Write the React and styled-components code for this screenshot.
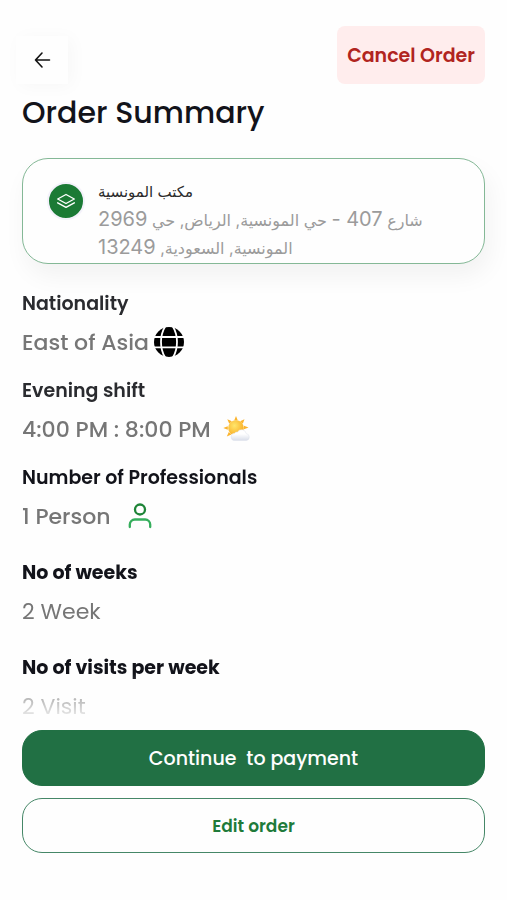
import React from "react";
import styled, { createGlobalStyle } from "styled-components";

const GlobalStyle = createGlobalStyle`
  *, *::before, *::after { box-sizing: border-box; }
  body {
    margin: 0;
    background: #fefefe;
    color: #12131a;
    font-family: Poppins, Inter, "DejaVu Sans", sans-serif;
  }
  h1, h2, p, dl, dt, dd { margin: 0; }
  button { font-family: inherit; cursor: pointer; }
  svg { display: block; flex: none; }
`;

const Page = styled.main`
  min-height: 100vh;
  display: flex;
  flex-direction: column;
  padding: 26px 22px 46px;
`;

const Header = styled.header`
  display: flex;
  justify-content: space-between;
  align-items: flex-end;
`;

const BackButton = styled.button`
  display: grid;
  place-items: center;
  width: 52px;
  height: 48px;
  margin-left: -6px;
  padding: 0;
  border: 0;
  background: #fefefe;
  box-shadow: 4px 2px 18px rgba(0, 0, 0, 0.03);
`;

const CancelButton = styled.button`
  height: 58px;
  padding: 0 10px;
  border: 0;
  border-radius: 8px;
  background: #ffeded;
  color: #b12420;
  font-size: 19px;
  font-weight: 600;
  white-space: nowrap;
`;

const Title = styled.h1`
  margin-top: 8px;
  font-size: 30px;
  line-height: 42px;
  font-weight: 500;
`;

const AddressCard = styled.section`
  display: flex;
  gap: 13px;
  margin-top: 24px;
  padding: 19px 24px 0;
  min-height: 106px;
  border: 1px solid #84b896;
  border-radius: 26px;
  background: #fefefe;
  box-shadow: 4px 12px 24px rgba(0, 0, 0, 0.05);
`;

const Badge = styled.span`
  display: grid;
  place-items: center;
  flex: none;
  width: 38px;
  height: 38px;
  margin-top: 4px;
  border: 2px solid #f4f2fb;
  border-radius: 50%;
  background: #1b7a35;
`;

const AddressText = styled.div`
  direction: rtl;
  text-align: left;
  font-family: Inter, "DejaVu Sans", sans-serif;
  line-height: 28px;
`;

const AddressName = styled.h2`
  color: #2b2b2b;
  font-size: 15px;
  line-height: 28px;
  font-weight: 400;
`;

const AddressLine = styled.p`
  color: #9b9b9b;
  font-size: 16px;
  line-height: 28px;
`;

const Digits = styled.span`
  font-size: 20px;
  line-height: 1;
`;

const Details = styled.dl`
  display: flex;
  flex-direction: column;
  gap: 26px;
  margin-top: 27px;
  mask-image: linear-gradient(#000 calc(100% - 50px), transparent);
`;

const DetailGroup = styled.div`
  display: flex;
  flex-direction: column;
  gap: 18px;
`;

const Label = styled.dt`
  color: ${(p) => (p.$dark ? "#12131a" : "#2a2b2f")};
  font-size: 19px;
  line-height: 26px;
  font-weight: ${(p) => (p.$bold ? 700 : 600)};
`;

const Value = styled.dd`
  display: flex;
  align-items: center;
  gap: ${(p) => (p.$gap ? p.$gap : 0)}px;
  height: 36px;
  margin-top: 7px;
  color: #767676;
  font-size: 22px;
  font-weight: ${(p) => (p.$gap ? 500 : 400)};
`;

const Actions = styled.footer`
  display: flex;
  flex-direction: column;
  gap: 12px;
  margin-top: 6px;
`;

const ActionButton = styled.button`
  height: ${(p) => (p.$primary ? 56 : 55)}px;
  border: 1px solid ${(p) => (p.$primary ? "#217044" : "#458767")};
  border-radius: 20px;
  background: ${(p) => (p.$primary ? "#217044" : "#fefefe")};
  color: ${(p) => (p.$primary ? "#fefefe" : "#207a3a")};
  font-size: ${(p) => (p.$primary ? 19 : 17)}px;
  font-weight: ${(p) => (p.$primary ? 500 : 600)};
  white-space: pre;
`;

const ArrowIcon = () => (
  <svg width="18" height="18" viewBox="0 0 18 18" fill="none" stroke="#111" strokeWidth="1.6" strokeLinecap="round" strokeLinejoin="round" aria-hidden="true">
    <path d="M16.500 9H2.500M9 2L2.500 9L9 16" />
  </svg>
);

const LayersIcon = () => (
  <svg width="20" height="16" viewBox="0 0 20 16" fill="none" stroke="#fff" strokeWidth="1.4" strokeLinecap="round" strokeLinejoin="round" aria-hidden="true">
    <path d="M10 1.500L18.300 6 10 10.500 1.700 6z" />
    <path d="M1.700 9.800L10 14.300l8.300-4.500" />
  </svg>
);

const GlobeIcon = () => (
  <svg width="30" height="30" viewBox="0 0 30 30" aria-hidden="true">
    <circle cx="15" cy="15" r="15" fill="#000" />
    <g fill="none" stroke="#fff" strokeWidth="1.800">
      <path d="M11.500-1C5.500 8 5.500 22 11.500 31M18.500-1C24.500 8 24.500 22 18.500 31" />
      <path d="M0 10h30M0 20.300h30" />
    </g>
  </svg>
);

const SunCloudIcon = () => (
  <svg width="28" height="26" viewBox="0 0 28 26" aria-hidden="true">
    <defs>
      <radialGradient id="sun" cx="40%" cy="35%" r="65%">
        <stop offset="0" stopColor="#ffe66b" />
        <stop offset="1" stopColor="#f9ae25" />
      </radialGradient>
      <linearGradient id="cloud" x1="0" y1="0" x2="0" y2="1">
        <stop offset="0.4" stopColor="#fff" />
        <stop offset="1" stopColor="#d8dde9" />
      </linearGradient>
    </defs>
    <path
      d="M13 0l1.800 4.500h-3.600zM21.500 3.200l-1.700 4.600-2.700-2.500zM25.500 11.500l-4.500 1.800v-3.600zM4.300 3.200l4.600 2-2.600 2.600zM.300 12l4.500-1.800v3.600zM3.800 20.600l2-4.500 2.600 2.500zM12 24l-1.300-4.300h3z"
      fill="#fbb32c"
    />
    <circle cx="13" cy="12" r="7.800" fill="url(#sun)" />
    <path
      d="M12 24.500a3.600 3.600 0 0 1-.500-7.200 3 3 0 0 1 3-1.300 4.700 4.700 0 0 1 8.700 1.600 3.500 3.500 0 0 1 .300 6.900z"
      fill="url(#cloud)"
      stroke="#dce0ea"
      strokeWidth="0.500"
    />
  </svg>
);

const PersonIcon = () => (
  <svg width="24" height="26" viewBox="0 0 24 26" fill="none" strokeWidth="2.300" strokeLinecap="round" aria-hidden="true">
    <circle cx="12" cy="6.500" r="5" stroke="#1e8437" />
    <path d="M1.800 24v-2.500a5 5 0 0 1 5-5h10.400a5 5 0 0 1 5 5V24" stroke="#35ae5c" />
  </svg>
);

function Detail({ label, dark, bold, gap, icon, children }) {
  return (
    <div>
      <Label $dark={dark} $bold={bold}>{label}</Label>
      <Value $gap={gap}>
        <span>{children}</span>
        {icon}
      </Value>
    </div>
  );
}

export default function App() {
  return (
    <>
      <GlobalStyle />
      <Page>
        <Header>
          <BackButton type="button" aria-label="Back">
            <ArrowIcon />
          </BackButton>
          <CancelButton type="button">Cancel Order</CancelButton>
        </Header>
        <Title>Order Summary</Title>
        <AddressCard>
          <Badge>
            <LayersIcon />
          </Badge>
          <AddressText lang="ar">
            <AddressName>مكتب المونسية</AddressName>
            <AddressLine>
              شارع <Digits>407 -</Digits> حي المونسية, الرياض, حي <Digits>2969</Digits>
            </AddressLine>
            <AddressLine>
              المونسية, السعودية, <Digits>13249</Digits>
            </AddressLine>
          </AddressText>
        </AddressCard>
        <Details>
          <DetailGroup>
            <Detail label="Nationality" gap={5} icon={<GlobeIcon />}>East of Asia</Detail>
            <Detail label="Evening shift" gap={12} icon={<SunCloudIcon />}>4:00 PM : 8:00 PM</Detail>
            <Detail label="Number of Professionals" dark gap={17} icon={<PersonIcon />}>1 Person</Detail>
          </DetailGroup>
          <Detail label="No of weeks" dark bold>2 Week</Detail>
          <Detail label="No of visits per week" dark bold>2 Visit</Detail>
        </Details>
        <Actions>
          <ActionButton type="button" $primary>{"Continue  to payment"}</ActionButton>
          <ActionButton type="button">Edit order</ActionButton>
        </Actions>
      </Page>
    </>
  );
}
